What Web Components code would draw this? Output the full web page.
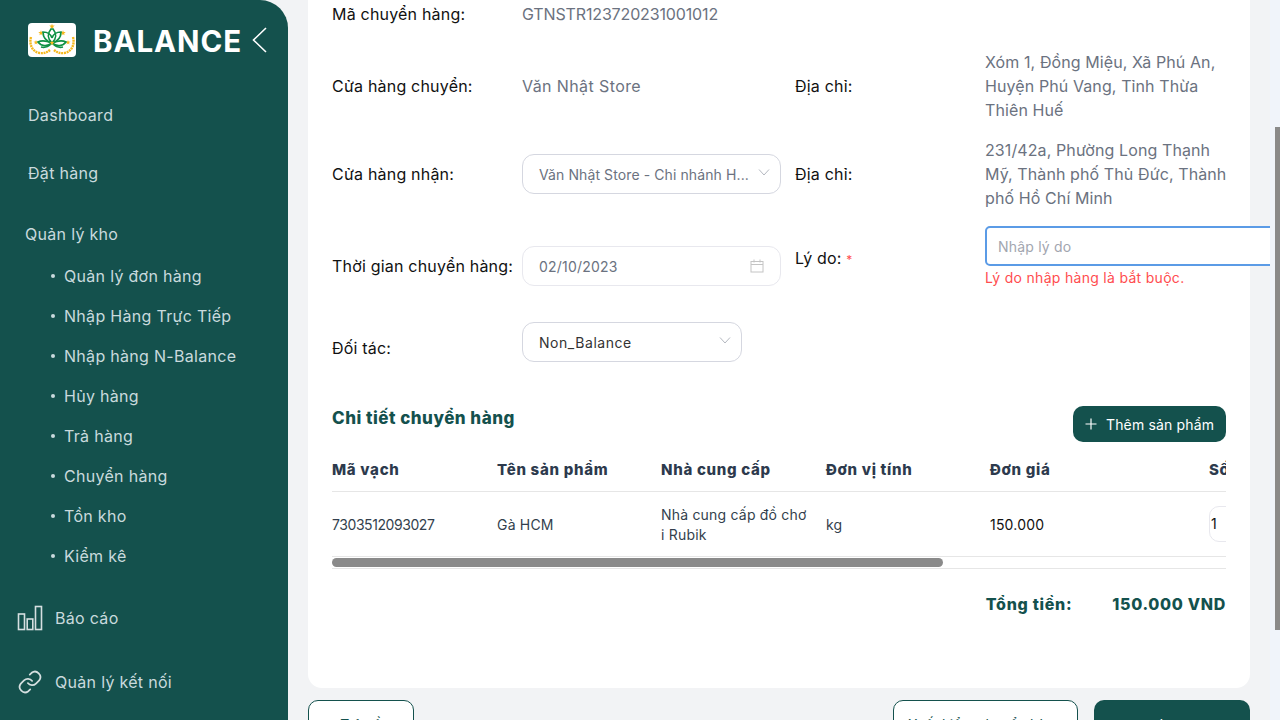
<!DOCTYPE html>
<html lang="vi">
<head>
<meta charset="utf-8">
<title>Chuyển hàng</title>
<style>
  html, body { margin: 0; height: 720px; overflow: hidden; }
  body { display: flex; font-family: "Inter", "Noto Sans", sans-serif; background: #f2f3f5; color: #111; }
  [slot=label], [slot=label2] { display: block; color: #111; }
  .val { color: #6b7280; line-height: 24px; letter-spacing: .1px; }
  .req { color: #ff4d4f; font-size: 12px; }
</style>
</head>
<body>
<balance-sidebar>
  <nav-link style="height:58px;margin-top:29px">Dashboard</nav-link>
  <nav-link style="height:58px">Đặt hàng</nav-link>
  <nav-link style="height:64px;margin-left:-3px">Quản lý kho</nav-link>
  <nav-link sub style="margin-top:-10px">Quản lý đơn hàng</nav-link>
  <nav-link sub>Nhập Hàng Trực Tiếp</nav-link>
  <nav-link sub>Nhập hàng N-Balance</nav-link>
  <nav-link sub>Hủy hàng</nav-link>
  <nav-link sub>Trả hàng</nav-link>
  <nav-link sub>Chuyển hàng</nav-link>
  <nav-link sub>Tồn kho</nav-link>
  <nav-link sub>Kiểm kê</nav-link>
  <nav-link icon="bars" style="height:64px;margin-top:10px">Báo cáo</nav-link>
  <nav-link icon="link" style="height:64px">Quản lý kết nối</nav-link>
</balance-sidebar>

<main-area>
  <form-row style="height:28px">
    <span slot="label">Mã chuyển hàng:</span>
    <span slot="field" class="val" style="letter-spacing:-.14px">GTNSTR123720231001012</span>
  </form-row>
  <form-row style="height:72px;margin-top:22px">
    <span slot="label">Cửa hàng chuyển:</span>
    <span slot="field" class="val" style="letter-spacing:.4px">Văn Nhật Store</span>
    <span slot="label2">Địa chỉ:</span>
    <div slot="field2" class="val">Xóm 1, Đồng Miệu, Xã Phú An, Huyện Phú Vang, Tỉnh Thừa Thiên Huế</div>
  </form-row>
  <form-row style="height:72px;margin-top:16px">
    <span slot="label">Cửa hàng nhận:</span>
    <field-box slot="field" kind="select" muted style="letter-spacing:.1px">Văn Nhật Store - Chi nhánh H...</field-box>
    <span slot="label2">Địa chỉ:</span>
    <div slot="field2" class="val">231/42a, Phường Long Thạnh Mỹ, Thành phố Thủ Đức, Thành phố Hồ Chí Minh</div>
  </form-row>
  <form-row style="height:64px;margin-top:16px">
    <span slot="label" style="margin-top:16px">Thời gian chuyển hàng:</span>
    <field-box slot="field" kind="date" muted style="margin-top:16px">02/10/2023</field-box>
    <span slot="label2">Lý do: <span class="req">*</span></span>
    <reason-input slot="field2"></reason-input>
  </form-row>
  <form-row style="height:40px;margin-top:32px">
    <span slot="label" style="padding-top:12px">Đối tác:</span>
    <field-box slot="field" kind="select" style="width:220px;letter-spacing:.55px">Non_Balance</field-box>
  </form-row>
  <detail-table></detail-table>
  <footer-actions slot="after"></footer-actions>
</main-area>
<page-scrollbar></page-scrollbar>

<script>
const icons = {
  bars: `<svg width="26" height="26" viewBox="0 0 26 26" fill="none" stroke="#d5dfe0" stroke-width="1.6"><rect x="1.5" y="9" width="6" height="15.5"/><rect x="10.2" y="14" width="5.6" height="10.5"/><rect x="18.5" y="1.5" width="6" height="23"/></svg>`,
  link: `<svg width="26" height="26" viewBox="0 0 24 24" fill="none" stroke="#d5dfe0" stroke-width="1.6" stroke-linecap="round" stroke-linejoin="round"><path d="M10 13a5 5 0 0 0 7.5.5l3-3a5 5 0 0 0-7-7l-1.7 1.7"/><path d="M14 11a5 5 0 0 0-7.5-.5l-3 3a5 5 0 0 0 7 7l1.7-1.7"/></svg>`,
  chevron: `<svg width="12" height="12" viewBox="0 0 12 12" fill="none" stroke="#b4b8c0" stroke-width="1"><path d="M1 3.5l5 5.5 5-5.5"/></svg>`,
  calendar: `<svg width="14" height="14" viewBox="0 0 14 14" fill="none" stroke="#c4c4c4" stroke-width="1"><rect x="1" y="2.5" width="12" height="10.5"/><path d="M1 5.5h12M4 .5v3M10 .5v3"/></svg>`,
  plus: `<svg width="12" height="12" viewBox="0 0 12 12" stroke="#fff" stroke-width="1.2"><path d="M6 .5v11M.5 6h11"/></svg>`
};

function star(cx, cy, r, fill) {
  let pts = [];
  for (let i = 0; i < 10; i++) {
    const a = -Math.PI / 2 + i * Math.PI / 5;
    const d = i % 2 ? r * 0.42 : r;
    pts.push((cx + d * Math.cos(a)).toFixed(1) + "," + (cy + d * Math.sin(a)).toFixed(1));
  }
  return `<polygon points="${pts.join(" ")}" fill="${fill}"/>`;
}

const logoSvg = `<svg width="48" height="34" viewBox="0 0 48 34">
  <rect width="48" height="34" rx="4" fill="#fff"/>
  ${star(24, 3.5, 2.8, "#f5b81f")}${star(13, 10, 2.8, "#f5b81f")}${star(35, 10, 2.8, "#f5b81f")}${star(8, 19.5, 2.6, "#f5b81f")}${star(40, 19.5, 2.6, "#f5b81f")}
  <path d="M3 14c-2 7 1 15 9 16 4 .5 7-.5 10-3M45 14c2 7-1 15-9 16-4 .5-7-.5-10-3" fill="none" stroke="#f5b81f" stroke-width="2.4" stroke-dasharray="2 .7"/>
  <g fill="none" stroke="#0f9145" stroke-width="1.7">
    <path d="M24 20c-5-5-5-9-1-14 1 0 1 0 2 0 4 5 4 9-1 14z"/>
    <path d="M24 20c-7-2-9-6-9-11 5 0 8 3 9 6M24 20c7-2 9-6 9-11-5 0-8 3-9 6"/>
    <path d="M24 20c-5-2-10-3-14-1 3 4 9 5 14 1zM24 20c5-2 10-3 14-1-3 4-9 5-14 1z"/>
    <path d="M23 21c-3 3-6 4-10 3M25 21c3 3 6 4 10 3"/>
  </g>
  ${star(24, 20, 2.6, "#f5b81f")}
</svg>`;

class BalanceSidebar extends HTMLElement {
  constructor() {
    super();
    this.attachShadow({ mode: "open" });
    this.shadowRoot.innerHTML = `
      <style>
        :host { display: block; flex: none; width: 288px; height: 720px; background: #14514d; border-top-right-radius: 28px; box-sizing: border-box; padding-left: 28px; overflow: hidden; }
        .brand { display: flex; align-items: center; height: 34px; padding-top: 23px; box-sizing: content-box; }
        .name { margin-left: 17px; width: 148px; padding-top: 2px; font-size: 29.5px; font-weight: 700; color: #fff; letter-spacing: .95px; white-space: nowrap; line-height: 34px; }
        .back { margin-left: 11px; flex: none; }
      </style>
      <div class="brand">
        <span style="display:flex">${logoSvg}</span>
        <span class="name">BALANCE</span>
        <svg class="back" width="15" height="26" viewBox="0 0 15 26" fill="none" stroke="#fff" stroke-width="1.6"><path d="M14 1L1.5 13 14 25"/></svg>
      </div>
      <slot></slot>`;
  }
}

class NavLink extends HTMLElement {
  constructor() {
    super();
    this.attachShadow({ mode: "open" });
    const icon = this.getAttribute("icon");
    const sub = this.hasAttribute("sub");
    this.shadowRoot.innerHTML = `
      <style>
        :host { display: flex; align-items: center; height: 40px; font-size: 16px; color: #c9dadd; white-space: nowrap; letter-spacing: .3px; }
        :host([sub]) { padding-left: 23px; }
        :host([icon]) { margin-left: -11px; }
        .dot { width: 4px; height: 4px; border-radius: 50%; background: #c9dadd; margin-right: 9px; flex: none; }
        .ic { display: flex; width: 26px; margin-right: 12px; flex: none; }
      </style>
      ${sub ? '<span class="dot"></span>' : ""}
      ${icon ? `<span class="ic">${icons[icon]}</span>` : ""}
      <slot></slot>`;
  }
}

class MainArea extends HTMLElement {
  constructor() {
    super();
    this.attachShadow({ mode: "open" });
    this.shadowRoot.innerHTML = `
      <style>
        :host { display: block; flex: none; width: 982px; height: 720px; overflow: hidden; box-sizing: border-box; padding: 0 20px; }
        .card { background: #fff; height: 688px; box-sizing: border-box; border-radius: 0 0 14px 14px; padding: 0 24px; }
      </style>
      <div class="card"><slot></slot></div>
      <slot name="after"></slot>`;
  }
}

class FormRow extends HTMLElement {
  constructor() {
    super();
    this.attachShadow({ mode: "open" });
    this.shadowRoot.innerHTML = `
      <style>
        :host { display: grid; grid-template-columns: 190px 259px 190px 1fr; align-items: center; font-size: 16px; letter-spacing: .2px; }
        .l2 { margin-left: 14px; }
        .f2 { margin-left: 14px; width: 242px; }
      </style>
      <div><slot name="label"></slot></div>
      <div><slot name="field"></slot></div>
      <div class="l2"><slot name="label2"></slot></div>
      <div class="f2"><slot name="field2"></slot></div>`;
  }
}

class FieldBox extends HTMLElement {
  constructor() {
    super();
    this.attachShadow({ mode: "open" });
    const kind = this.getAttribute("kind");
    this.shadowRoot.innerHTML = `
      <style>
        :host { display: flex; align-items: center; justify-content: space-between; width: 259px; height: 40px; box-sizing: border-box; border: 1px solid #d5d7e0; border-radius: 12px; padding: 0 16px; font-size: 14px; color: #333; background: #fff; white-space: nowrap; letter-spacing: .2px; }
        :host([kind=date]) { border-color: #e8e8ee; }
        :host([muted]) { color: #6b7280; }
        .ic { display: flex; margin-right: ${kind === "date" ? 0 : -6}px; margin-top: ${kind === "date" ? 0 : -5}px; }
      </style>
      <span><slot></slot></span>
      <span class="ic">${kind === "date" ? icons.calendar : icons.chevron}</span>`;
  }
}

class ReasonInput extends HTMLElement {
  constructor() {
    super();
    this.attachShadow({ mode: "open" });
    this.shadowRoot.innerHTML = `
      <style>
        :host { display: block; width: 310px; }
        .box { height: 40px; box-sizing: border-box; border: 2px solid #5b9be6; border-radius: 5px; background: #fff; display: flex; align-items: center; padding-left: 11px; font-size: 14px; color: #a2a6af; letter-spacing: .2px; }
        .err { color: #ff4d4f; font-size: 14px; line-height: 24px; letter-spacing: .3px; }
      </style>
      <div class="box">Nhập lý do</div>
      <div class="err">Lý do nhập hàng là bắt buộc.</div>`;
  }
}

class DetailTable extends HTMLElement {
  constructor() {
    super();
    this.attachShadow({ mode: "open" });
    this.shadowRoot.innerHTML = `
      <style>
        :host { display: block; }
        .head { display: flex; align-items: center; justify-content: space-between; height: 36px; margin-top: 44px; }
        h2 { margin: -12px 0 0; font-size: 17px; font-weight: 800; color: #14514d; letter-spacing: .5px; }
        .add { display: flex; align-items: center; gap: 9px; width: 153px; height: 36px; box-sizing: border-box; padding-left: 12px; border-radius: 10px; background: #14514d; color: #fff; font-size: 14px; letter-spacing: .15px; white-space: nowrap; }
        .wrap { width: 894px; margin-top: 5px; overflow: hidden; }
        .grid { display: grid; grid-template-columns: 165px 164px 165px 164px 219px 200px; width: 1077px; }
        .th { height: 44px; display: flex; align-items: center; font-size: 15px; font-weight: 800; color: #2d3a4d; border-bottom: 1px solid #e6e6e6; letter-spacing: .7px; white-space: nowrap; }
        .td { height: 64px; display: flex; align-items: center; font-size: 14px; color: #333f4d; border-bottom: 1px solid #e6e6e6; line-height: 20px; letter-spacing: .2px; }
        .td span { display: block; width: 150px; padding-top: 2px; }
        .td .code { letter-spacing: -.43px; }
        .price { color: #111; }
        .qty { width: 60px; height: 36px; box-sizing: border-box; border: 1px solid #e8e8ee; border-radius: 10px; display: flex; align-items: center; padding-left: 1px; color: #111; }
        .track { height: 10px; border-bottom: 1px solid #e6e6e6; }
        .thumb { width: 611px; height: 9px; margin-top: 1px; background: #8a8a8a; border-radius: 5px; }
        .total { display: flex; justify-content: flex-end; align-items: center; height: 24px; margin-top: 23px; font-size: 16px; font-weight: 800; color: #14514d; letter-spacing: .7px; white-space: nowrap; }
        .total b { font-weight: 800; margin-left: 40px; }
      </style>
      <div class="head">
        <h2>Chi tiết chuyển hàng</h2>
        <div class="add">${icons.plus}<span>Thêm sản phẩm</span></div>
      </div>
      <div class="wrap">
        <div class="grid">
          <div class="th">Mã vạch</div><div class="th">Tên sản phẩm</div><div class="th">Nhà cung cấp</div><div class="th">Đơn vị tính</div><div class="th">Đơn giá</div><div class="th">Số lượng</div>
          <div class="td"><span class="code">7303512093027</span></div><div class="td"><span>Gà HCM</span></div><div class="td"><span>Nhà cung cấp đồ chơ<br>i Rubik</span></div><div class="td"><span>kg</span></div><div class="td price"><span>150.000</span></div><div class="td"><div class="qty">1</div></div>
        </div>
        <div class="track"><div class="thumb"></div></div>
      </div>
      <div class="total">Tổng tiền:<b>150.000 VND</b></div>`;
  }
}

class FooterActions extends HTMLElement {
  constructor() {
    super();
    this.attachShadow({ mode: "open" });
    this.shadowRoot.innerHTML = `
      <style>
        :host { display: flex; margin-top: 12px; gap: 16px; }
        div { height: 48px; box-sizing: border-box; border-radius: 10px; display: flex; align-items: center; justify-content: center; font-size: 14px; white-space: nowrap; }
        .out { border: 1px solid #14514d; background: #fff; color: #14514d; }
        .solid { background: #14514d; color: #fff; width: 156px; }
      </style>
      <div class="out" style="width:106px;margin-right:auto">Trở về</div>
      <div class="out" style="width:185px">Xuất kiểm chuyển hàng</div>
      <div class="solid">Lưu</div>`;
  }
}

class PageScrollbar extends HTMLElement {
  constructor() {
    super();
    this.attachShadow({ mode: "open" });
    this.shadowRoot.innerHTML = `
      <style>
        :host { display: block; flex: none; width: 10px; height: 720px; background: #f0f4fa; box-sizing: border-box; padding: 127px 0 0 5px; }
        div { height: 503px; background: #8a8a8a; }
      </style>
      <div></div>`;
  }
}

customElements.define("balance-sidebar", BalanceSidebar);
customElements.define("nav-link", NavLink);
customElements.define("main-area", MainArea);
customElements.define("form-row", FormRow);
customElements.define("field-box", FieldBox);
customElements.define("reason-input", ReasonInput);
customElements.define("detail-table", DetailTable);
customElements.define("footer-actions", FooterActions);
customElements.define("page-scrollbar", PageScrollbar);
</script>
</body>
</html>
